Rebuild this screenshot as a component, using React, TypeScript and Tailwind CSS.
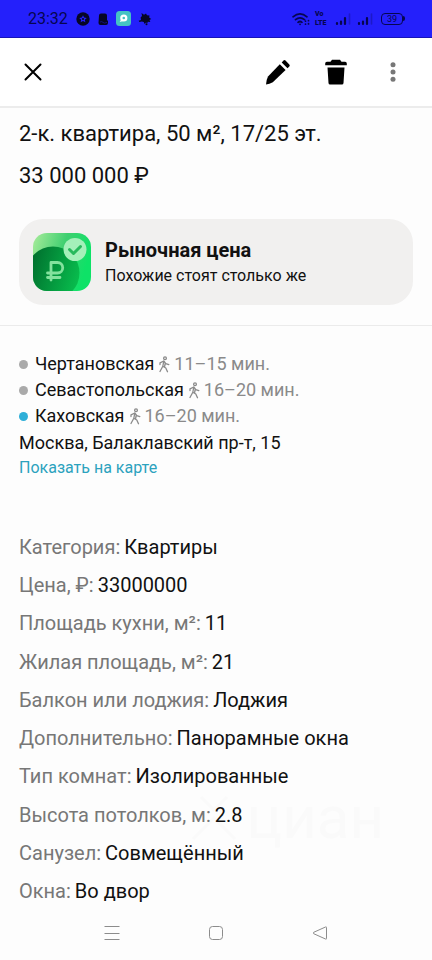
import React from 'react';

interface Station {
  name: string;
  time: string;
  current?: boolean;
}

const stations: Station[] = [
  { name: 'Чертановская', time: '11–15 мин.' },
  { name: 'Севастопольская', time: '16–20 мин.' },
  { name: 'Каховская', time: '16–20 мин.', current: true },
];

const details = [
  { label: 'Категория', value: 'Квартиры' },
  { label: 'Цена, ₽', value: '33000000' },
  { label: 'Площадь кухни, м²', value: '11' },
  { label: 'Жилая площадь, м²', value: '21' },
  { label: 'Балкон или лоджия', value: 'Лоджия' },
  { label: 'Дополнительно', value: 'Панорамные окна' },
  { label: 'Тип комнат', value: 'Изолированные' },
  { label: 'Высота потолков, м', value: '2.8' },
  { label: 'Санузел', value: 'Совмещённый' },
  { label: 'Окна', value: 'Во двор' },
];

const SignalIcon = () => (
  <svg viewBox="0 0 17 14" className="w-[17px] h-[14px]" aria-hidden="true">
    <path d="M2 12v-1M6 12V9.5M10 12V6" stroke="#060650" strokeWidth="2.2" strokeLinecap="round" />
    <path d="M14.5 12V2" stroke="#1c19c8" strokeWidth="1.6" strokeLinecap="round" />
  </svg>
);

const StatusBar = () => (
  <div className="flex shrink-0 items-center justify-between h-[38px] pl-7 pr-[27px] bg-[#2420fb] border-b border-[#1714b8] text-[#060650]">
    <div className="flex items-center">
      <span className="w-12 text-base leading-5">23:32</span>
      <div className="flex items-center gap-[7px]">
        <svg viewBox="0 0 14 14" className="w-[14px] h-[14px]" aria-hidden="true">
          <circle cx="7" cy="7" r="6.7" fill="#060625" />
          <path d="m7 3.2 1.1 2.4 2.7.3-2 1.8.6 2.6L7 9l-2.4 1.3.6-2.6-2-1.8 2.7-.3z" fill="#2420fb" />
          <circle cx="7" cy="7" r="1.1" fill="#060625" />
        </svg>
        <svg viewBox="0 0 12 14" className="w-3 h-[14px]" aria-hidden="true">
          <path d="M4 1.5h4q2 0 2 2V8l1 1v2q0 2-2 2H3.5q-2 0-2-2L2 3.5q0-2 2-2" fill="#060625" />
          <path d="M3 10q2-1 3 .4t4 0" fill="none" stroke="#1815a0" strokeWidth=".7" />
        </svg>
        <svg viewBox="0 0 15 15" className="w-[15px] h-[15px]" aria-hidden="true">
          <rect width="15" height="15" rx="3.5" fill="#45c3c3" />
          <circle cx="7.8" cy="7" r="3.6" fill="#fff" />
          <path d="m3.7 11 1.8-3 2 2z" fill="#fff" />
          <circle cx="7.8" cy="7" r="1.3" fill="#45c3c3" />
        </svg>
        <svg viewBox="0 0 14 14" className="w-[14px] h-[14px]" aria-hidden="true">
          <path d="M3.5 1 6 2.8 8 1.5l1 1.8 2.5.2-.3 2 2 1.5-1.7 1 .8 2-2.5-.3-.5 1.5-1.3-.7L6.5 12l-.7-2-2-.5L1.5 10l-.8-1.3L3 7.9l-.4-2.4L4 4z" fill="#060625" />
          <circle cx="8.5" cy="12.3" r="1" fill="#060625" />
        </svg>
      </div>
    </div>
    <div className="flex items-center gap-[5px]">
      <svg viewBox="0 0 18 14" className="w-[18px] h-[14px]" fill="none" stroke="#060650" strokeWidth="1.7" strokeLinecap="round" aria-hidden="true">
        <path d="M1 4.8q7-6 14 0M3.5 7.7q4.5-3.8 9 0M6 10.3q2-1.6 4 0" />
        <path d="M8 12.3h.1M13.5 9v.2M13.5 12v.2M16.5 8.5v.2M16.5 11.5v.5" />
      </svg>
      <div className="w-[15px] text-[7px] leading-[9px] font-black">
        <div>Vo</div>
        <div>LTE</div>
      </div>
      <SignalIcon />
      <SignalIcon />
      <div className="flex items-center ml-[2px]">
        <span className="w-[22px] h-3 rounded border-[1.5px] border-[#060650] text-[9px] leading-[10px] text-center">39</span>
        <span className="w-[2px] h-[5px] rounded-r bg-[#060650]" />
      </div>
    </div>
  </div>
);

const Toolbar = () => (
  <header className="flex shrink-0 items-center justify-between h-[70px] pl-[19px] pr-6 bg-white border-b-2 border-[#ececec]">
    <button type="button" aria-label="Закрыть" className="p-[5px]">
      <svg viewBox="0 0 18 18" className="w-[18px] h-[18px]" stroke="#000" strokeWidth="2" strokeLinecap="round">
        <path d="m1.5 1.5 15 15m0-15-15 15" />
      </svg>
    </button>
    <div className="flex items-center">
      <button type="button" aria-label="Изменить" className="mr-[34px]">
        <svg viewBox="0 0 26 26" className="w-[26px] h-[26px]">
          <path d="m14.8 5.2 5.8 5.8L7.8 23.2Q4.500 25.200 1 25.500q.2-4.500 2-8z" fill="#000" />
          <path d="m16.7 3.4 1.8-1.8q1-1 2 0l3.8 3.8q1 1 0 2l-1.8 1.8z" fill="#000" />
        </svg>
      </button>
      <button type="button" aria-label="Удалить" className="mr-[31px]">
        <svg viewBox="0 0 22 26" className="w-[22px] h-[26px]">
          <path d="M.2 6.2V4.5q0-1.700 1.700-1.700h3.6L7 .8h8l1.500 2h3.600q1.700 0 1.700 1.700v1.700zM2.500 8.500h17l-1 15.500q-.1 1.500-1.600 1.500H5.100q-1.500 0-1.600-1.500z" fill="#000" />
        </svg>
      </button>
      <button type="button" aria-label="Ещё" className="px-3">
        <svg viewBox="0 0 6 20" className="w-[6px] h-5" fill="#777">
          <circle cx="3" cy="2.7" r="2.5" />
          <circle cx="3" cy="10" r="2.5" />
          <circle cx="3" cy="17.3" r="2.5" />
        </svg>
      </button>
    </div>
  </header>
);

const PriceIcon = () => (
  <svg viewBox="0 0 58 58" className="w-[58px] h-[58px] shrink-0" aria-hidden="true">
    <defs>
      <linearGradient id="tile" x1="0" y1="0" x2="1" y2=".3">
        <stop offset="0" stopColor="#a9ec9b" />
        <stop offset=".55" stopColor="#3fcf70" />
        <stop offset="1" stopColor="#0ee267" />
      </linearGradient>
      <linearGradient id="coin" x1="0" y1=".3" x2="1" y2=".6">
        <stop offset="0" stopColor="#006b2c" />
        <stop offset="1" stopColor="#08bd4d" />
      </linearGradient>
      <clipPath id="tileClip">
        <rect width="58" height="58" rx="14" />
      </clipPath>
    </defs>
    <g clipPath="url(#tileClip)">
      <rect width="58" height="58" fill="url(#tile)" />
      <circle cx="20" cy="40" r="26.5" fill="url(#coin)" />
    </g>
    <circle cx="42" cy="16.5" r="11.5" fill="#a5f0ba" />
    <path d="m36.5 16.5 4 4 7-7" fill="none" stroke="#27b95c" strokeWidth="3" strokeLinecap="round" strokeLinejoin="round" />
    <path d="M18 47V29.5h6.5a5.2 5.2 0 0 1 0 10.5H14.5M14.5 44.5H27" fill="none" stroke="#83e29d" strokeWidth="2.8" strokeLinecap="round" strokeLinejoin="round" />
  </svg>
);

const WalkIcon = () => (
  <svg viewBox="0 0 12 17" className="w-3 h-[17px]" fill="none" stroke="#8a8a8a" strokeWidth="1.3" strokeLinecap="round" strokeLinejoin="round" aria-hidden="true">
    <circle cx="7" cy="2.3" r="1.4" />
    <path d="M2 8.5V6.8L5.8 5l-1 5.3L2 15.5M5.8 5l2 2.6 3 1M4.8 10.3l3 1.7 1.7 3.7M7.3 7l-.8 4" />
  </svg>
);

const Watermark = () => (
  <div className="absolute right-12 bottom-[60px] flex items-center gap-2 text-[#fafafa] text-6xl leading-[64px] select-none" aria-hidden="true">
    <svg viewBox="0 0 50 50" className="w-[50px] h-[50px]" fill="none" stroke="#fafafa" strokeWidth="3">
      <path d="M12 4 25 17 38 4M4 46l21-21 21 21" />
    </svg>
    циан
  </div>
);

const NavigationBar = () => (
  <nav className="flex shrink-0 items-center justify-between h-[50px] pb-1 px-[104px]" aria-label="Навигация">
    <button type="button" aria-label="Недавние">
      <svg viewBox="0 0 16 16" className="w-4 h-4" stroke="#8c8c8c">
        <path d="M.5 1.5h15M.5 8.5h15M.5 14.5h15" />
      </svg>
    </button>
    <button type="button" aria-label="Домой">
      <svg viewBox="0 0 16 16" className="w-4 h-4" fill="none" stroke="#8c8c8c">
        <rect x="1.5" y="1.5" width="13" height="13" rx="3" />
      </svg>
    </button>
    <button type="button" aria-label="Назад">
      <svg viewBox="0 0 16 16" className="w-4 h-4" fill="none" stroke="#8c8c8c" strokeLinejoin="round">
        <path d="M14.5 2.5v11q0 1-1 .5L1.7 8.7q-1-.7 0-1.4L13.5 2q1-.5 1 .5z" />
      </svg>
    </button>
  </nav>
);

export default function App() {
  return (
    <div className="flex flex-col min-h-screen bg-[#fdfdfd] font-['Roboto',sans-serif] text-[#111]">
      <StatusBar />
      <Toolbar />

      <main className="flex flex-1 flex-col">
        <section className="px-[19px] pt-[5px] pb-5 border-b border-[#ebebeb]">
          <h1 className="text-[22px] leading-[42px]">2-к. квартира, 50 м², 17/25 эт.</h1>
          <p className="text-[22px] leading-[42px]">33 000 000 ₽</p>
          <div className="flex items-center gap-[14px] h-[86px] mt-[22px] px-[14px] rounded-[24px] bg-[#f1f0ef]">
            <PriceIcon />
            <div>
              <h2 className="text-[20px] leading-7 font-bold">Рыночная цена</h2>
              <p className="text-base leading-6">Похожие стоят столько же</p>
            </div>
          </div>
        </section>

        <section className="px-[19px] pt-[25px] text-[18px] leading-[26px]">
          <ul>
            {stations.map((station) => (
              <li key={station.name} className="flex items-center">
                <span className={`w-[9px] h-[9px] mr-[7px] rounded-full ${station.current ? 'bg-[#2fafd8]' : 'bg-[#aaa]'}`} />
                <span className="mr-1">{station.name}</span>
                <WalkIcon />
                <span className="ml-1 text-[#8a8a8a]">{station.time}</span>
              </li>
            ))}
          </ul>
          <p className="pt-px">Москва, Балаклавский пр-т, 15</p>
          <a href="#map" className="block text-base leading-6 text-[#2ca2be]">Показать на карте</a>
        </section>

        <section className="relative flex flex-1 flex-col px-[19px] pt-12">
          <Watermark />
          <dl className="relative flex flex-1 flex-col justify-between text-[20px]">
            {details.map((item) => (
              <div key={item.label} className="flex gap-1 leading-[38px]">
                <dt className="text-[#777]">{item.label}:</dt>
                <dd>{item.value}</dd>
              </div>
            ))}
          </dl>
        </section>
      </main>

      <NavigationBar />
    </div>
  );
}
